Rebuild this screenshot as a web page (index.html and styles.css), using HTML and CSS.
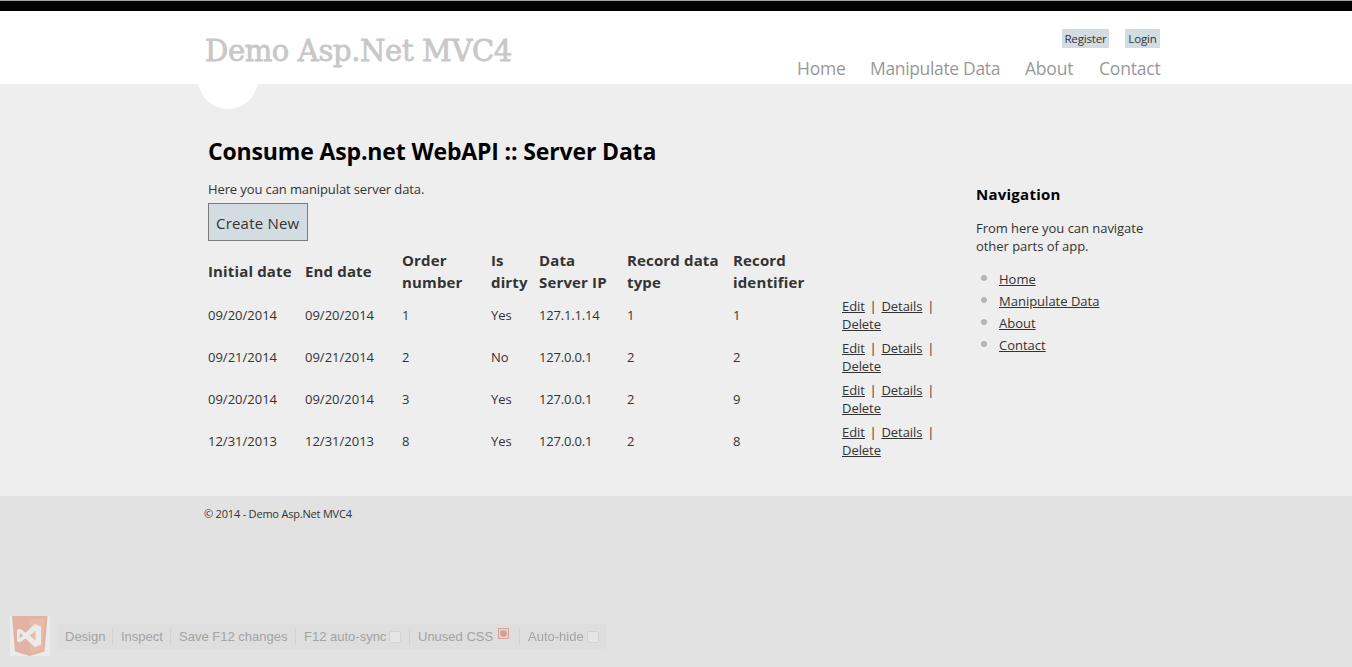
FILE: index.html
```html
<!DOCTYPE html>
<html lang="en">
<head>
<meta charset="utf-8">
<title>Server Data - Demo Asp.Net MVC4</title>
<link rel="stylesheet" href="styles.css">
</head>
<body>
<header class="header">
  <div class="wrap header-row">
    <div class="brand"><span class="site-title">Demo Asp.Net MVC4</span></div>
    <div class="header-right">
      <div class="login"><a class="register">Register</a><a class="signin">Login</a></div>
      <nav class="menu"><a class="m-home">Home</a><a class="m-data">Manipulate Data</a><a class="m-about">About</a><a class="m-contact">Contact</a></nav>
    </div>
  </div>
</header>
<main class="main">
  <div class="wrap columns">
    <article class="content">
      <h1 class="title">Consume Asp.net WebAPI :: Server Data</h1>
      <p class="intro">Here you can manipulat server data.</p>
      <a class="create"><span>Create New</span></a>
      <table class="grid">
        <colgroup><col class="c-date"><col class="c-date"><col class="c-order"><col class="c-dirty"><col class="c-ip"><col class="c-type"><col class="c-id"><col class="c-actions"></colgroup>
        <thead><tr><th>Initial date</th><th>End date</th><th>Order<br>number</th><th>Is<br>dirty</th><th>Data<br>Server IP</th><th>Record data<br>type</th><th>Record<br>identifier</th><th></th></tr></thead>
        <tbody>
        <tr><td>09/20/2014</td><td>09/20/2014</td><td>1</td><td>Yes</td><td class="ip">127.1.1.14</td><td>1</td><td>1</td><td class="actions"><a>Edit</a><i>|</i><a>Details</a><i>|</i><br><a>Delete</a></td></tr>
        <tr><td>09/21/2014</td><td>09/21/2014</td><td>2</td><td>No</td><td class="ip">127.0.0.1</td><td>2</td><td>2</td><td class="actions"><a>Edit</a><i>|</i><a>Details</a><i>|</i><br><a>Delete</a></td></tr>
        <tr><td>09/20/2014</td><td>09/20/2014</td><td>3</td><td>Yes</td><td class="ip">127.0.0.1</td><td>2</td><td>9</td><td class="actions"><a>Edit</a><i>|</i><a>Details</a><i>|</i><br><a>Delete</a></td></tr>
        <tr><td>12/31/2013</td><td>12/31/2013</td><td>8</td><td>Yes</td><td class="ip">127.0.0.1</td><td>2</td><td>8</td><td class="actions"><a>Edit</a><i>|</i><a>Details</a><i>|</i><br><a>Delete</a></td></tr>
        </tbody>
      </table>
    </article>
    <aside class="side">
      <h3 class="side-title">Navigation</h3>
      <p class="side-text">From here you can navigate<br>other parts of app.</p>
      <ul class="side-list"><li><a>Home</a></li><li><a>Manipulate Data</a></li><li><a>About</a></li><li><a>Contact</a></li></ul>
    </aside>
  </div>
</main>
<footer class="wrap footer"><p class="copy">© 2014 - Demo Asp.Net MVC4</p></footer>
<div class="devbar">
  <svg class="vs" width="40" height="40" viewBox="0 0 40 40">
    <rect width="40" height="40" fill="#ebebeb"/>
    <path d="M2 0H37.500L34.500 35.500L19.800 40L5 35.500Z" fill="#e2b3a5"/>
    <path d="M19.800 3H34.500L32 33.500L19.800 37Z" fill="#e6bca8"/>
    <path fill-rule="evenodd" fill="#ebebeb" d="M25 8L31 10.500V28.500L25 31.300L15.500 22.500L10 26.500L7 25V14L10 12.700L15.500 16.800ZM25.500 14.800L19.800 19.600L25.500 24.500ZM9.800 16.500V22.500L13 19.600Z"/>
  </svg>
  <div class="tools">
    <span class="tool t1">Design</span><span class="tool t2">Inspect</span><span class="tool t3">Save F12 changes</span><span class="tool t4">F12 auto-sync<b class="check"></b></span><span class="tool t5">Unused CSS<svg class="rec" width="11" height="11" viewBox="0 0 11 11"><rect x=".5" y=".5" width="10" height="10" fill="#e0d2cf" stroke="#d5a49a"/><circle cx="5.500" cy="5.500" r="3.300" fill="#d0a097"/></svg></span><span class="tool t6">Auto-hide<b class="check"></b></span>
  </div>
</div>
</body>
</html>
```
FILE: styles.css
```css
* { box-sizing: border-box; }
body {
  margin: 0;
  height: 667px;
  overflow: hidden;
  background: #e2e2e2;
  border-top: 1px solid #a0a3a3;
  color: #333;
  font: 13px/18px "Open Sans", "Noto Sans", sans-serif;
}
h1, h3, p, ul { margin: 0; padding: 0; font-weight: 400; }
a, p, h1, h3, th, td, span { white-space: nowrap; }
.wrap { width: 968px; margin: 0 auto; }
.header { height: 83px; background: #fff; border-top: 10px solid #000; }
.header-row { display: flex; justify-content: space-between; }
.brand { position: relative; height: 73px; padding: 22px 0 0 13px; }
.brand::after {
  content: "";
  position: absolute;
  left: 6px;
  top: 38px;
  width: 60px;
  height: 60px;
  border-radius: 50%;
  background: #fff;
  z-index: 0;
}
.site-title {
  position: relative;
  z-index: 1;
  display: block;
  color: #c8c8c8;
  font: 29px/36px "DejaVu Serif", serif;
  letter-spacing: -.35px;
  -webkit-text-stroke: .8px #c8c8c8;
}
.header-right { display: flex; flex-direction: column; align-items: flex-end; padding-top: 18px; }
.login { display: flex; gap: 16px; font-size: 11.500px; line-height: 20px; letter-spacing: -.15px; }
.login a { height: 19px; background: #d3dce0; text-align: center; }
.register { width: 47px; }
.signin { width: 35px; }
.menu { display: flex; margin-top: 7px; color: #999; font-size: 17.500px; line-height: 26px; letter-spacing: -.2px; }
.m-home { width: 73px; }
.m-data { width: 155px; letter-spacing: -.34px; }
.m-about { width: 74px; }
.m-contact { width: 61px; }
.main { height: 412px; background: #eee; }
.columns { display: flex; padding-left: 16px; }
.content { width: 768px; padding-top: 51px; }
.title { color: #000; font-size: 23px; font-weight: 700; line-height: 32px; letter-spacing: -.15px; }
.intro { margin-top: 13px; letter-spacing: -.11px; }
.create {
  display: block;
  width: 100px;
  height: 38px;
  margin-top: 5px;
  padding: 0 7px;
  border: 1px solid #7c7c7c;
  background: #d3dce0;
  font-size: 15px;
  line-height: 39px;
  letter-spacing: .2px;
}
.grid { width: 729px; margin-top: 7px; table-layout: fixed; border-collapse: collapse; }
.c-date { width: 97px; }
.c-order { width: 89px; }
.c-dirty { width: 48px; }
.c-ip { width: 88px; }
.c-type { width: 106px; }
.c-id { width: 109px; }
.c-actions { width: 95px; }
.grid th { height: 46px; padding: 0; text-align: left; font-size: 15px; line-height: 22px; letter-spacing: .15px; }
.grid td { height: 42px; padding: 0; }
.grid .ip { letter-spacing: -.18px; }
.actions a, .side-list a { text-decoration: underline; text-underline-offset: 1px; }
.actions a { letter-spacing: -.05px; }
.actions i { margin: 0 4.700px; font-style: normal; }
.side { padding-top: 100px; }
.side-title { color: #000; font-size: 15px; font-weight: 700; line-height: 20px; letter-spacing: .25px; }
.side-text { margin-top: 15px; letter-spacing: -.04px; }
.side-list { margin-top: 13px; list-style: none; line-height: 22px; }
.side-list li { display: flex; align-items: center; }
.side-list li::before { content: ""; width: 6px; height: 6px; margin: -3px 12px 0 5px; border-radius: 50%; background: #b5b5b5; }
.footer { padding: 9px 0 0 12px; font-size: 11px; letter-spacing: -.2px; }
.devbar { position: fixed; left: 10px; top: 616px; display: flex; align-items: center; gap: 8px; }
.tools {
  display: flex;
  align-items: center;
  width: 549px;
  height: 25px;
  margin-top: 1px;
  border-radius: 4px;
  background: #dedede;
  color: #a3a3a3;
  font: 13px/16px "Liberation Sans", Arial, sans-serif;
}
.tool { display: flex; align-items: center; height: 16px; padding-left: 8px; border-left: 1px solid #d2d2d2; }
.t1 { width: 54px; padding-left: 7px; border-left: 0; }
.t2 { width: 58px; }
.t3 { width: 125px; }
.t4 { width: 114px; }
.t5 { width: 110px; }
.t6 { width: 87px; }
.check { width: 12px; height: 12px; margin-left: 3px; border: 1px solid #d2d2d2; border-radius: 2px; background: #e6e6e6; }
.rec { margin: -7px 0 0 5px; }
```
